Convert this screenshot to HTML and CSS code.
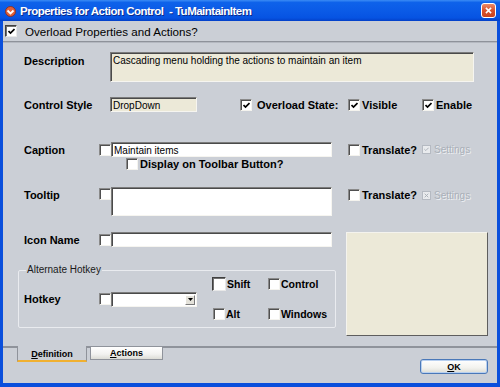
FILE: index.html
```html
<!DOCTYPE html>
<html lang="en">
<head>
  <meta charset="UTF-8">
  <title>Properties for Action Control</title>
  <link rel="stylesheet" href="styles.css">
</head>
<body>

  <div class="window">
    <!-- Title bar -->
    <div class="titlebar">
      <svg class="app-icon" viewBox="0 0 11 11">
        <circle cx="5.5" cy="5.5" r="5" fill="#e0603a" stroke="#8a2a14" stroke-width="0.8"/>
        <path d="M2.5 4.5 L5.5 7.5 L8.5 4.5" fill="none" stroke="#fff" stroke-width="1.8"/>
      </svg>
      <span class="title">Properties for Action Control&nbsp; - TuMaintainItem</span>
      <span class="close">
        <svg viewBox="0 0 15 15"><path d="M4.5 4.5 L10.5 10.5 M10.5 4.5 L4.5 10.5" stroke="#fff" stroke-width="1.8"/></svg>
      </span>
    </div>

    <div class="frame">
      <div class="client">

        <!-- Overload switch -->
        <div class="overload">
          <span class="cb dark"><svg viewBox="0 0 7 7"><path d="M0.5 3 L2.5 5 L6.5 1"/></svg></span>
          <span class="overload-text">Overload Properties and Actions?</span>
        </div>
        <div class="sep"></div>

        <div class="form">
          <!-- Description -->
          <div class="row row-desc">
            <span class="label wide">Description</span>
            <div class="field beige desc">Cascading menu holding the actions to maintain an item</div>
          </div>

          <!-- Control style -->
          <div class="row row-style">
            <span class="label wide">Control Style</span>
            <div class="field beige style-box">DropDown</div>
            <span class="cb state-cb"><svg viewBox="0 0 7 7"><path d="M0.5 3 L2.5 5 L6.5 1"/></svg></span>
            <span class="state-label">Overload State:</span>
            <span class="check col-a"><span class="cb"><svg viewBox="0 0 7 7"><path d="M0.5 3 L2.5 5 L6.5 1"/></svg></span>Visible</span>
            <span class="check"><span class="cb"><svg viewBox="0 0 7 7"><path d="M0.5 3 L2.5 5 L6.5 1"/></svg></span>Enable</span>
          </div>

          <!-- Caption -->
          <div class="row row-caption">
            <span class="label">Caption</span>
            <span class="cb"></span>
            <div class="field text-box">Maintain items</div>
            <span class="check col-a translate"><span class="cb"></span>Translate?</span>
            <span class="setting"><span class="mini"><svg viewBox="0 0 7 7"><path d="M0.5 3 L2.5 5 L6.5 1"/></svg></span>Settings</span>
          </div>
          <div class="row row-display">
            <span class="check"><span class="cb"></span>Display on Toolbar Button?</span>
          </div>

          <!-- Tooltip -->
          <div class="row row-tooltip">
            <span class="label">Tooltip</span>
            <span class="cb"></span>
            <div class="field text-box tall"></div>
            <span class="check col-a translate"><span class="cb"></span>Translate?</span>
            <span class="setting"><span class="mini"><svg viewBox="0 0 7 7"><path d="M1 1 L6 6 M6 1 L1 6"/></svg></span>Settings</span>
          </div>

          <div class="lower">
            <div class="lower-left">
              <!-- Icon name -->
              <div class="row row-icon">
                <span class="label">Icon Name</span>
                <span class="cb"></span>
                <div class="field text-box"></div>
              </div>

              <!-- Hotkey group -->
              <fieldset class="hotkey-group">
                <legend>Alternate Hotkey</legend>
                <div class="hotkey-row">
                  <span class="label">Hotkey</span>
                  <span class="cb"></span>
                  <div class="field combo">
                    <span class="combo-btn"><svg viewBox="0 0 7 4"><path d="M0 0 H7 L3.5 4 Z"/></svg></span>
                  </div>
                  <div class="mods">
                    <span class="check"><span class="cb dark big"></span>Shift</span>
                    <span class="check"><span class="cb"></span>Control</span>
                    <span class="check"><span class="cb"></span>Alt</span>
                    <span class="check"><span class="cb"></span>Windows</span>
                  </div>
                </div>
              </fieldset>
            </div>
            <div class="preview"></div>
          </div>
        </div>

        <!-- Tabs and OK -->
        <div class="tabbar">
          <span class="tab-line lead"></span>
          <span class="tab active"><u>D</u>efinition</span>
          <span class="tab-line gap"></span>
          <span class="tab"><u>A</u>ctions</span>
          <span class="tab-line rest">
            <button class="ok"><u>O</u>K</button>
          </span>
        </div>

      </div>
    </div>
  </div>

</body>
</html>
```

FILE: styles.css
```css
* {
  box-sizing: border-box;
}

body {
  margin: 0;
  font-family: "Liberation Sans", Arial, sans-serif;
  color: #000;
}

/* Window frame */
.window {
  width: 500px;
  height: 387px;
  display: flex;
  flex-direction: column;
  background: #0a4fdc;
}

.titlebar {
  height: 21px;
  display: flex;
  align-items: center;
  padding: 0 4px 0 5px;
  background: linear-gradient(to bottom, #3b8cf5 0%, #0e62ea 12%, #0a5ae6 55%, #0653e2 85%, #0340c8 100%);
}

.app-icon {
  width: 11px;
  height: 11px;
  margin-top: 2px;
}

.title {
  margin-left: 4px;
  color: #fff;
  font-weight: bold;
  font-size: 11.5px;
  letter-spacing: -0.5px;
  text-shadow: 1px 1px 0 #0b2a8c;
  flex: 1;
}

.close {
  width: 15px;
  height: 15px;
  border: 1px solid #fff;
  border-radius: 3px;
  background: linear-gradient(to bottom, #ec8a68, #d8522e 50%, #c8421e);
  display: flex;
}

.close svg {
  width: 13px;
  height: 13px;
}

.frame {
  flex: 1;
  padding: 0 3px 4px 3px;
  display: flex;
}

.client {
  flex: 1;
  background: #cbcfd6;
  display: flex;
  flex-direction: column;
}

/* Checkboxes */
.cb {
  width: 12px;
  height: 12px;
  flex: none;
  display: inline-flex;
  align-items: center;
  justify-content: center;
  background: #fff;
  border: 1px solid;
  border-color: #8a8a8a #f4f3ee #f4f3ee #8a8a8a;
  box-shadow: inset 1px 1px 0 #505050;
}

.cb svg {
  width: 7px;
  height: 7px;
  margin: 1px 0 0 1px;
}

.cb path,
.mini path {
  fill: none;
  stroke: #000;
  stroke-width: 1.7;
}

.cb.dark {
  border-color: #404040 #e8e8e8 #e8e8e8 #404040;
  box-shadow: inset 1px 1px 0 #707070;
}

.cb.big {
  width: 14px;
  height: 14px;
}

.check {
  display: flex;
  align-items: center;
  gap: 2px;
  font-weight: bold;
  font-size: 11px;
}

/* Top switch */
.overload {
  display: flex;
  align-items: center;
  height: 12px;
  margin-top: 4px;
  padding-left: 2px;
}

.overload-text {
  margin-left: 8px;
  font-size: 11.6px;
}

.sep {
  margin-top: 4px;
  height: 2px;
  border-top: 1px solid #8e929a;
  border-bottom: 1px solid #b4b8c0;
}

/* Form rows */
.form {
  padding-left: 15px;
}

.row {
  display: flex;
  align-items: center;
  padding-left: 6px;
}

.label {
  width: 75px;
  flex: none;
  font-weight: bold;
  font-size: 11px;
}

.label.wide {
  width: 86px;
}

.field {
  font-size: 10px;
  line-height: 12px;
  padding: 2px 2px 0 2px;
  border: 1px solid;
  border-color: #7b7b7b #f6f5f0 #f6f5f0 #7b7b7b;
  box-shadow: inset 1px 1px 0 #4a4a4a;
  background: #fff;
  white-space: nowrap;
  overflow: hidden;
}

.field.beige {
  background: #ece9d8;
}

.row-desc {
  margin-top: 9px;
  align-items: flex-start;
}

.row-desc .label {
  padding-top: 3px;
}

.desc {
  width: 364px;
  height: 30px;
}

.row-style {
  margin-top: 15px;
  height: 15px;
}

.style-box {
  width: 87px;
  height: 15px;
}

.state-cb {
  margin-left: 43px;
}

.state-label {
  width: 91px;
  margin-left: 5px;
  font-weight: bold;
  font-size: 11px;
}

.col-a {
  width: 74px;
}

.row-caption {
  margin-top: 30px;
  height: 15px;
}

.text-box {
  width: 221px;
  height: 15px;
}

.translate {
  margin-left: 16px;
}

.setting {
  display: flex;
  align-items: center;
  gap: 3px;
  font-size: 10px;
  color: #aab0b8;
  text-shadow: 1px 1px 0 #eef0f3;
}

.mini {
  width: 9px;
  height: 9px;
  display: inline-flex;
  align-items: center;
  justify-content: center;
  background: #e9ebee;
  border: 1px solid #b5bac2;
}

.mini svg {
  width: 5px;
  height: 5px;
}

.mini path {
  stroke: #a8aeb6;
  stroke-width: 1.3;
}

.row-display {
  margin-top: 1px;
  height: 12px;
  padding-left: 108px;
}

.row-tooltip {
  margin-top: 17px;
  align-items: flex-start;
}

.row-tooltip .label {
  padding-top: 2px;
}

.row-tooltip .cb {
  margin-top: 1px;
}

.row-tooltip .check {
  margin-top: 1px;
}

.row-tooltip .setting {
  margin-top: 3px;
}

.text-box.tall {
  height: 29px;
}

/* Lower part: icon name, hotkey group, preview */
.lower {
  display: flex;
  margin-top: 16px;
}

.lower-left {
  width: 318px;
}

.row-icon {
  height: 15px;
}

.hotkey-group {
  margin: 17px 0 0 0;
  padding: 1px 0 6px 5px;
  border: 1px solid #e9ebef;
  border-radius: 2px;
}

.hotkey-group legend {
  padding: 0 1px;
  margin-left: 2px;
  font-size: 10px;
  line-height: 12px;
  color: #1a1a1a;
}

.hotkey-row {
  display: flex;
  align-items: center;
}

.combo {
  width: 86px;
  height: 15px;
  padding: 2px 1px 0 0;
  display: flex;
  justify-content: flex-end;
}

.combo-btn {
  width: 10px;
  height: 10px;
  display: flex;
  align-items: center;
  justify-content: center;
  background: #e4e2da;
  border: 1px solid;
  border-color: #fff #7a7a7a #7a7a7a #fff;
}

.combo-btn svg {
  width: 5px;
  height: 3px;
}

.mods {
  margin-left: 15px;
  display: grid;
  grid-template-columns: 55px auto;
  grid-template-rows: 14px 14px;
  row-gap: 16px;
}

.mods .check {
  font-size: 10.5px;
  gap: 1px;
}

.mods .check .cb {
  margin-left: 1px;
}

.mods .check .cb.big {
  margin-left: 0;
}

.preview {
  width: 142px;
  height: 104px;
  margin-left: 10px;
  background: #ece9d8;
  border: 1px solid;
  border-color: #f4f3ee #5e5e5e #5e5e5e #f4f3ee;
}

/* Bottom tabs */
.tabbar {
  display: flex;
  align-items: flex-start;
  margin-top: 10px;
  height: 37px;
}

.tab-line {
  border-top: 2px solid #8f939b;
  height: 37px;
}

.tab-line.lead {
  width: 14px;
}

.tab-line.gap {
  width: 3px;
}

.tab-line.rest {
  flex: 1;
  display: flex;
  justify-content: flex-end;
  align-items: flex-start;
  padding: 11px 9px 0 0;
}

.tab {
  height: 14px;
  width: 73px;
  display: flex;
  align-items: center;
  justify-content: center;
  font-size: 9px;
  font-weight: bold;
  border: 1px solid #8f939b;
  background: linear-gradient(to bottom, #ffffff, #f2f2f0 60%, #dcdcd6);
}

.tab.active {
  width: 70px;
  height: 16px;
  border-top: none;
  border-bottom: 2px solid #f0b030;
  background: none;
  padding-top: 1px;
}

.ok {
  width: 68px;
  height: 15px;
  padding: 0;
  font-family: "Liberation Sans", Arial, sans-serif;
  font-size: 9px;
  font-weight: bold;
  color: #000;
  border: 1px solid #4a78b8;
  border-radius: 3px;
  background: linear-gradient(to bottom, #ffffff, #f2f2ee 60%, #dcdcd4);
  box-shadow: inset 0 0 0 1px #b8d0f0;
}
```
